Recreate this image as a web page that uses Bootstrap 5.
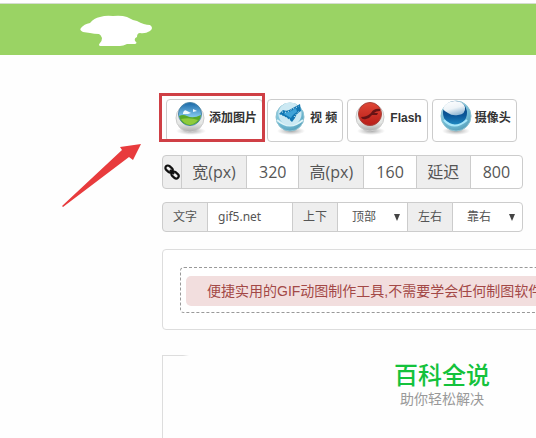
<!DOCTYPE html>
<html lang="zh-CN">
<head>
<meta charset="utf-8">
<meta name="viewport" content="width=device-width, initial-scale=1">
<title>GIF 动图制作</title>
<link href="https://cdn.jsdelivr.net/npm/bootstrap@5.3.0/dist/css/bootstrap.min.css" rel="stylesheet">
<style>
body{font-family:"Liberation Sans","Noto Sans CJK SC",sans-serif;background:#fefefe;color:#555;overflow:hidden}
.site-header{margin-top:3px;border-top:1px solid #d5dcd0;background:#9ad364;padding:10px 0 4px 78px}
.cloud-logo{display:block;width:76px;height:37px}
.workspace{padding:44px 0 0 162px}
.tools{padding-left:4px;gap:4px}
.tool-btn{height:43px;border:1px solid #ccc;border-radius:4px;background:#fff;color:#333;font-size:12px;font-weight:700;display:flex;align-items:center;gap:2px;line-height:18px;white-space:nowrap;padding:0 5px 6px 6px}
.tool-btn svg{width:34px;height:36px;flex:none}
.highlight-box{position:absolute;inset:-6px -2px 0 -7px;border:3px solid #cf3f45;pointer-events:none}
.fields{width:361px;flex-wrap:nowrap}
.fields > *{border-color:#ccc;color:#555;box-shadow:none}
.fields .input-group-text{background:#eee;justify-content:center;padding:0}
.fields .form-control,.fields .form-select{background-color:#fff;min-width:0}
.size-row{margin-top:13px;height:34px}
.size-row > *{font:16px/20px "Open Sans","Noto Sans CJK SC",sans-serif}
.size-row .form-control{padding:0 12px}
.size-row > *,.text-row > *{border-radius:4px}
.text-row{margin-top:13px;height:30px}
.text-row > *{font:12px/18px "Noto Sans","Noto Sans CJK SC",sans-serif}
.text-row .form-control{padding:0 10px}
.text-row .form-select{flex:0 0 71px;padding:0 18px 0 14px;background-image:url("data:image/svg+xml,%3Csvg xmlns='http://www.w3.org/2000/svg' viewBox='0 0 6 7'%3E%3Cpath fill='%23444' d='M0 0h6L3 7z'/%3E%3C/svg%3E");background-size:6px 7px;background-position:right 7px center}
.cell-link{flex:0 0 20px}
.cell-label{flex:0 0 66px}
.cell-delay{flex:0 0 55px}
.cell-side{flex:0 0 46px}
.drop-panel{min-width:560px;margin-top:17px;border:1px solid #ddd;border-radius:4px;padding:17px 17px 16px;background:#fff}
.drop-zone{border:1px dashed #999;border-radius:4px;padding:8px 5px 6px}
.notice{background:#f2dede;color:#a34846;border-radius:5px;padding:5px 21px;font-size:14px;line-height:20px;white-space:nowrap}
.preview{margin-top:25px;min-height:83px;border-left:1px solid #ddd;background:linear-gradient(90deg,#ddd 20px,transparent 26px) top left/26px 1px no-repeat;padding:5px 46px 0 0}
.brand-name{color:#14c23c;font:500 24px/28px "Noto Sans CJK SC",sans-serif}
.brand-tag{color:#999;font:14px/20px "Noto Sans CJK SC",sans-serif}
.pointer{position:absolute;left:61px;top:142px;width:82px;height:66px}
</style>
<script src="https://cdn.jsdelivr.net/npm/bootstrap@5.3.0/dist/js/bootstrap.bundle.min.js"></script>
</head>
<body>
<svg width="0" height="0" class="position-absolute" aria-hidden="true">
<defs>
<linearGradient id="silver" x2="0" y2="1"><stop stop-color="#fafafa"/><stop offset=".7" stop-color="#e4e6e4"/><stop offset="1" stop-color="#aaa"/></linearGradient>
<linearGradient id="sky" x2="0" y2="1"><stop stop-color="#1767a8"/><stop offset=".6" stop-color="#80c5eb"/></linearGradient>
<radialGradient id="aqua" cx=".4" cy=".3" r=".8"><stop stop-color="#c9e9f2"/><stop offset=".6" stop-color="#76bfd8"/><stop offset="1" stop-color="#4b94af"/></radialGradient>
<linearGradient id="ruby" x2="0" y2="1"><stop stop-color="#e04636"/><stop offset="1" stop-color="#b81d18"/></linearGradient>
<linearGradient id="lens" x2="0" y2="1"><stop stop-color="#063c77"/><stop offset=".6" stop-color="#0b5799"/><stop offset="1" stop-color="#208bc4"/></linearGradient>
<linearGradient id="gloss" x2=".4" y2="1"><stop stop-color="#fff"/><stop offset=".6" stop-color="#eef4f8"/><stop offset="1" stop-color="#9dbfd8"/></linearGradient>
<radialGradient id="shade"><stop stop-color="#666" stop-opacity=".6"/><stop offset="1" stop-color="#888" stop-opacity="0"/></radialGradient>
</defs>
</svg>
<header class="site-header">
<svg class="cloud-logo" viewBox="0 0 76 37" aria-hidden="true"><path fill="#fff" d="M3 14Q6 10 12 9Q16 4 22 3Q28 1 35 2Q43 1 49 3Q54 6 59 7Q66 11 72 11Q76 14 72 17Q67 20 62 19Q59 19 59 23Q56 24 57 27Q60 29 57 30L49 30Q45 32 42 32L22 32Q20 31 22 29Q24 27 24 24Q23 21 21 20Q16 20 12 19L5 18Q1 16 3 14z"/></svg>
</header>
<main class="workspace">
<div class="tools d-flex">
<div class="position-relative">
<button type="button" class="btn tool-btn">
<svg viewBox="0 0 34 36" aria-hidden="true"><ellipse cx="18" cy="31" rx="15" ry="4" fill="url(#shade)"/><circle cx="17" cy="18" r="14" fill="url(#silver)" stroke="#ccc"/><circle cx="17" cy="14" r="11.500" fill="url(#sky)" stroke="#4a86a8"/><path fill="#58a829" d="M6 16q4-2 8 0q6 3 14-1q-1 9-11 10.500q-9-1-11-9.500z"/><path fill="#8fcb3c" d="M8 19q9-2 17 1q-3 4-8 5q-6-1-9-6z"/><path fill="#eef9ff" d="M10 13q1-4 4-2l4 2l-3 1h-5zM20 9l4 2l-4 1z"/></svg>
<span>添加图片</span></button>
<div class="highlight-box"></div>
</div>
<button type="button" class="btn tool-btn">
<svg viewBox="0 0 34 36" aria-hidden="true"><ellipse cx="17" cy="31" rx="14" ry="4" fill="url(#shade)"/><circle cx="16" cy="17" r="14" fill="url(#aqua)" stroke="#8fc3d2"/><path d="M3 20q13 11 26 0" fill="none" stroke="#dff4f8" stroke-width="2"/><circle cx="16" cy="14" r="11.500" fill="#cce9f3"/><path fill="#1176b2" d="M5 14l4-4q4 2 8-1l9-5l1 7q-5 3-6 7l-3 4q-5-5-13-8z"/><path fill="#3fa3d8" d="M11 12q5 1 11-4l1 4q-5 3-6 6l-7-4z"/><path d="M8 12q5 1 9-2l8-4M7 15l10 5M20 17l5-6" fill="none" stroke="#e7faff" stroke-dasharray="1 2"/></svg>
<span>视 频</span></button>
<button type="button" class="btn tool-btn">
<svg viewBox="0 0 34 36" aria-hidden="true"><ellipse cx="17" cy="31" rx="14" ry="4" fill="url(#shade)"/><circle cx="16" cy="17" r="14" fill="url(#silver)" stroke="#ccc"/><circle cx="16" cy="14" r="11.500" fill="url(#ruby)" stroke="#a8433c"/><path fill="#681315" d="M26 9q-6-1-9 4q-4 4-10 4q1 3 5 2q4-1 6-4h5l1-2h-4q2-2 6-2z"/></svg>
<span>Flash</span></button>
<button type="button" class="btn tool-btn">
<svg viewBox="0 0 34 36" aria-hidden="true"><ellipse cx="17" cy="31" rx="14" ry="4" fill="url(#shade)"/><circle cx="17" cy="16" r="15" fill="url(#aqua)" stroke="#8fc3d2"/><circle cx="16" cy="13" r="12" fill="url(#lens)"/><path fill="url(#gloss)" d="M4 9Q7 1 16 1Q24 1 26 7Q27 14 19 15Q13 16 9 13Q5 11 4 9z"/><path d="M5 20q10 11 23 0" fill="none" stroke="#a8e7fa" stroke-width="2"/></svg>
<span>摄像头</span></button>
</div>
<div class="input-group fields size-row">
<span class="input-group-text cell-link"><svg width="16" height="16" viewBox="0 0 16 16" fill="none" stroke="#111" stroke-width="2.200" aria-hidden="true"><rect x="1" y="2.500" width="8" height="5" rx="2.500" transform="rotate(42 5 5)"/><rect x="7" y="8.500" width="8" height="5" rx="2.500" transform="rotate(42 11 11)"/><path d="M6 6l4 4"/></svg></span>
<label class="input-group-text cell-label" for="w">宽(px)</label>
<input class="form-control" id="w" value="320">
<label class="input-group-text cell-label" for="h">高(px)</label>
<input class="form-control" id="h" value="160">
<label class="input-group-text cell-delay" for="delay">延迟</label>
<input class="form-control" id="delay" value="800">
</div>
<div class="input-group fields text-row">
<label class="input-group-text cell-side" for="caption">文字</label>
<input class="form-control" id="caption" value="gif5.net">
<label class="input-group-text cell-side" for="vpos">上下</label>
<select class="form-select" id="vpos"><option>顶部</option><option>底部</option></select>
<label class="input-group-text cell-side" for="hpos">左右</label>
<select class="form-select" id="hpos"><option>靠右</option><option>靠左</option></select>
</div>
<section class="drop-panel"><div class="drop-zone"><div class="notice">便捷实用的GIF动图制作工具,不需要学会任何制图软件</div></div></section>
<section class="preview d-flex justify-content-end">
<div class="text-center"><div class="brand-name">百科全说</div><div class="brand-tag">助你轻松解决</div></div>
</section>
</main>
<svg class="pointer" viewBox="0 0 82 66" aria-hidden="true"><path fill="#e83b3d" d="M1 64L61 8L59 5L80 2L72 18L68 15L2 65z"/></svg>
</body>
</html>
